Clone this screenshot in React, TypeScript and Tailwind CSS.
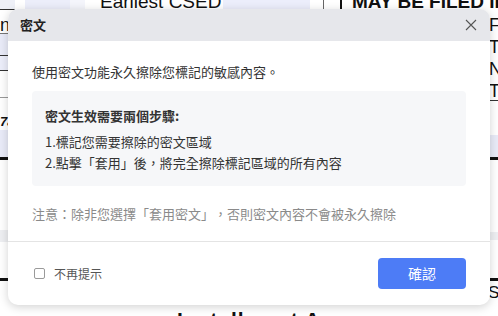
import React from "react";

const font = { fontFamily: '"Noto Sans CJK TC", "Noto Sans", sans-serif' } as const;

export default function App() {
  return (
    <div className="relative w-[498px] h-[316px] overflow-hidden bg-white" style={font}>
      {/* background document */}
      <div className="flex flex-col w-full h-full" style={{ fontFamily: '"Liberation Sans", Arial, sans-serif' }}>
        <div className="flex h-[10px] shrink-0">
          <div className="w-[15px] bg-[#eef0f7] border-b border-[#333]" />
          <div className="w-[10px] bg-white" />
          <div className="w-[45px] bg-[#eceefa]" />
          <div className="w-[15px] bg-[#f4f5fb]" />
          <div className="w-[138px] bg-white overflow-hidden">
            <div className="text-[19px] leading-none text-[#111] pl-[15px] -mt-[8px] whitespace-nowrap">Earliest CSED</div>
          </div>
          <div className="w-[87px] bg-[#eceefb]" />
          <div className="w-[13px] bg-white" />
          <div className="w-[17px] bg-white border-l border-[#666]" />
          <div className="flex-1 bg-white border-l-2 border-[#111] overflow-hidden">
            <div className="text-[19px] leading-none font-bold text-[#111] pl-[10px] -mt-[8px] whitespace-nowrap">MAY BE FILED IF</div>
          </div>
        </div>
        <div className="flex flex-1">
          <div className="w-[10px] flex flex-col text-[18px] leading-none text-[#111] overflow-hidden">
            <div className="h-[23px] bg-white pt-[6px]">n</div>
            <div className="h-[22px] bg-[#e9ebf8] border-t border-[#777]" />
            <div className="h-[15px] bg-[#eceefa] border-t border-[#333]" />
            <div className="h-[27px] bg-white border-t border-[#333]" />
            <div className="h-[33px] bg-white border-t border-[#999] pt-[17px] text-[13px] font-bold italic">7a</div>
            <div className="h-[27px] bg-[#e9ebf8]" />
            <div className="h-[73px] bg-white border-t-[3px] border-[#111]" />
            <div className="h-[12px] bg-[#eeeff2]" />
            <div className="h-[36px] bg-white" />
            <div className="flex-1 bg-white border-t-[3px] border-[#111]" />
          </div>
          <div className="flex-1 bg-white" />
          <div className="w-[10px] flex flex-col text-[18px] text-[#111] overflow-hidden">
            <div className="h-[90px] bg-white pt-[4px] pl-[1px] leading-[22px] whitespace-nowrap">
              <div>F</div>
              <div>T</div>
              <div>N</div>
              <div>TI</div>
            </div>
            <div className="h-[35px] bg-white border-t border-[#333]" />
            <div className="h-[22px] bg-[#e9ebf8]" />
            <div className="h-[75px] bg-white border-t-[3px] border-[#111]" />
            <div className="h-[8px] bg-[#eeeff2]" />
            <div className="h-[38px] bg-white" />
            <div className="flex-1 bg-white border-t-[3px] border-[#111] pt-[3px] text-[17px] leading-none">S</div>
          </div>
        </div>
        <div className="h-[12px] shrink-0 bg-white overflow-hidden flex justify-center">
          <div className="text-[21px] leading-none font-bold text-[#111] pt-[5px] whitespace-nowrap tracking-[1px]">Installment A</div>
        </div>
      </div>

      {/* dialog */}
      <div className="absolute left-[8px] top-[9px] w-[482px] h-[296px] bg-white rounded-[10px] shadow-[0_2px_10px_rgba(0,0,0,0.18)] overflow-hidden flex flex-col [text-spacing-trim:space-all]">
        <div className="h-[32px] bg-[#e6e7eb] flex items-center justify-between pl-[12px] pr-[13px] shrink-0">
          <span className="text-[13px] font-bold text-[#222]">密文</span>
          <svg width="12" height="12" viewBox="0 0 12 12" className="text-[#555]">
            <path d="M1 1L11 11M11 1L1 11" stroke="currentColor" strokeWidth="1.1" />
          </svg>
        </div>
        <div className="px-[24px] pt-[21px] flex flex-col">
          <p className="text-[13px] leading-[20px] text-[#333]">使用密文功能永久擦除您標記的敏感內容。</p>
          <div className="mt-[9px] bg-[#f6f7f9] rounded-[4px] pl-[13px] pt-[15px] pb-[13px] text-[13px] text-[#333]">
            <p className="font-bold leading-[20px]">密文生效需要兩個步驟:</p>
            <p className="leading-[20px] mt-[6px]">1.標記您需要擦除的密文區域</p>
            <p className="leading-[20px] mt-[1px]">2.點擊「套用」後，將完全擦除標記區域的所有內容</p>
          </div>
          <p className="mt-[18px] text-[13px] leading-[20px] text-[#8a8a8a]">注意：除非您選擇「套用密文」，否則密文內容不會被永久擦除</p>
        </div>
        <div className="mt-[17px] border-t border-[#e4e4e4] flex-1 flex items-center justify-between pl-[26px] pr-[24px]">
          <label className="flex items-center gap-[9px] text-[12px] text-[#555]">
            <span className="w-[11px] h-[11px] border border-[#9a9a9a] rounded-[2px] bg-white" />
            不再提示
          </label>
          <button className="w-[88px] h-[31px] rounded-[4px] bg-[#4d7cf6] text-white text-[14px]">確認</button>
        </div>
      </div>
    </div>
  );
}
